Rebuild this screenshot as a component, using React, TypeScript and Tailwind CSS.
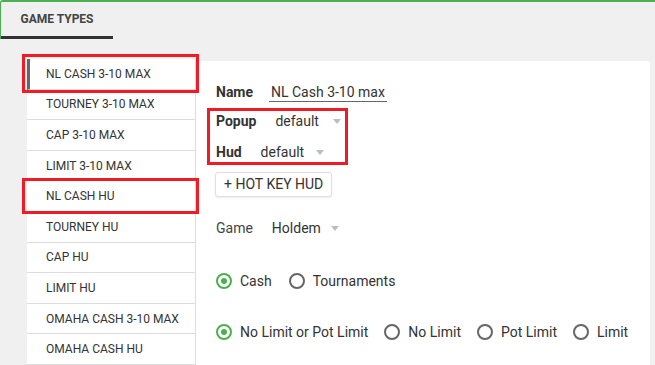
import React from "react";

const gameTypes = [
  "NL CASH 3-10 MAX",
  "TOURNEY 3-10 MAX",
  "CAP 3-10 MAX",
  "LIMIT 3-10 MAX",
  "NL CASH HU",
  "TOURNEY HU",
  "CAP HU",
  "LIMIT HU",
  "OMAHA CASH 3-10 MAX",
  "OMAHA CASH HU",
];

const Caret = () => (
  <span className="inline-block w-0 h-0 border-l-[4px] border-r-[4px] border-t-[5px] border-l-transparent border-r-transparent border-t-[#bdbdbd]" />
);

const Radio = ({ checked, label }: { checked?: boolean; label: string }) => (
  <label className="flex items-center gap-2">
    <span
      className={
        checked
          ? "w-[16px] h-[16px] rounded-full border-2 border-[#4caf50] flex items-center justify-center"
          : "w-[16px] h-[16px] rounded-full border-2 border-[#666] flex items-center justify-center"
      }
    >
      {checked && <span className="w-[6px] h-[6px] rounded-full bg-[#4caf50]" />}
    </span>
    <span>{label}</span>
  </label>
);

export default function App() {
  return (
    <div className="relative w-[655px] h-[365px] overflow-hidden bg-[#f0f0f0] font-['Roboto',sans-serif] text-[#333]">
      <div className="h-[39px] border-t-2 border-l border-[#4caf50] rounded-tl-[3px] flex items-end">
        <div className="w-[112px] h-[37px] border-b-[3px] border-[#333] flex items-center justify-center text-[12px] font-bold text-[#444]">
          GAME TYPES
        </div>
      </div>

      <div className="flex items-start">
        <div className="ml-[27px] mt-[20px] w-[169px] bg-white border-r border-[#ddd]">
          {gameTypes.map((t, i) => (
            <div
              key={t}
              className={
                i === 0
                  ? "h-[30.6px] border-b border-[#ddd] border-l-[3px] border-l-[#666] pl-[16px] flex items-center text-[12px]"
                  : "h-[30.6px] border-b border-[#ddd] pl-[19px] flex items-center text-[12px]"
              }
            >
              {t}
            </div>
          ))}
        </div>

        <div className="mt-[22px] w-[454px] h-[400px] bg-white rounded-tr-[3px] pl-[20px] pt-[17px] text-[14px]">
          <div className="h-[28px] flex items-center">
            <span className="font-bold w-[37px]">Name</span>
            <span className="ml-[16px] px-[2px] leading-[18px] border-b border-[#666]">NL Cash 3-10 max</span>
          </div>
          <div className="h-[30px] flex items-center">
            <span className="font-bold">Popup</span>
            <span className="ml-[19px]">default</span>
            <span className="ml-[14px] flex"><Caret /></span>
          </div>
          <div className="h-[32px] flex items-center">
            <span className="font-bold">Hud</span>
            <span className="ml-[19px]">default</span>
            <span className="ml-[12px] flex"><Caret /></span>
          </div>
          <button className="mt-[4px] -ml-[1px] h-[25px] px-[8px] border border-[#e0e0e0] rounded-[3px] shadow-[0_1px_2px_rgba(0,0,0,0.08)] bg-white text-[14px] text-[#333] flex items-center">
            + HOT KEY HUD
          </button>
          <div className="mt-[16px] h-[30px] flex items-center text-[#444]">
            <span>Game</span>
            <span className="ml-[19px] text-[#333]">Holdem</span>
            <span className="ml-[10px] flex"><Caret /></span>
          </div>
          <div className="mt-[23px] h-[30px] flex items-center gap-[17px]">
            <Radio checked label="Cash" />
            <Radio label="Tournaments" />
          </div>
          <div className="mt-[21px] h-[30px] flex items-center gap-[16px]">
            <Radio checked label="No Limit or Pot Limit" />
            <Radio label="No Limit" />
            <Radio label="Pot Limit" />
            <Radio label="Limit" />
          </div>
        </div>
      </div>

      <div className="absolute left-[22px] top-[54px] w-[177px] h-[39px] border-[3px] border-[#ee1c25]" />
      <div className="absolute left-[22px] top-[178px] w-[177px] h-[36px] border-[3px] border-[#ee1c25]" />
      <div className="absolute left-[207px] top-[108px] w-[141px] h-[57px] border-[3px] border-[#ee1c25]" />
    </div>
  );
}
